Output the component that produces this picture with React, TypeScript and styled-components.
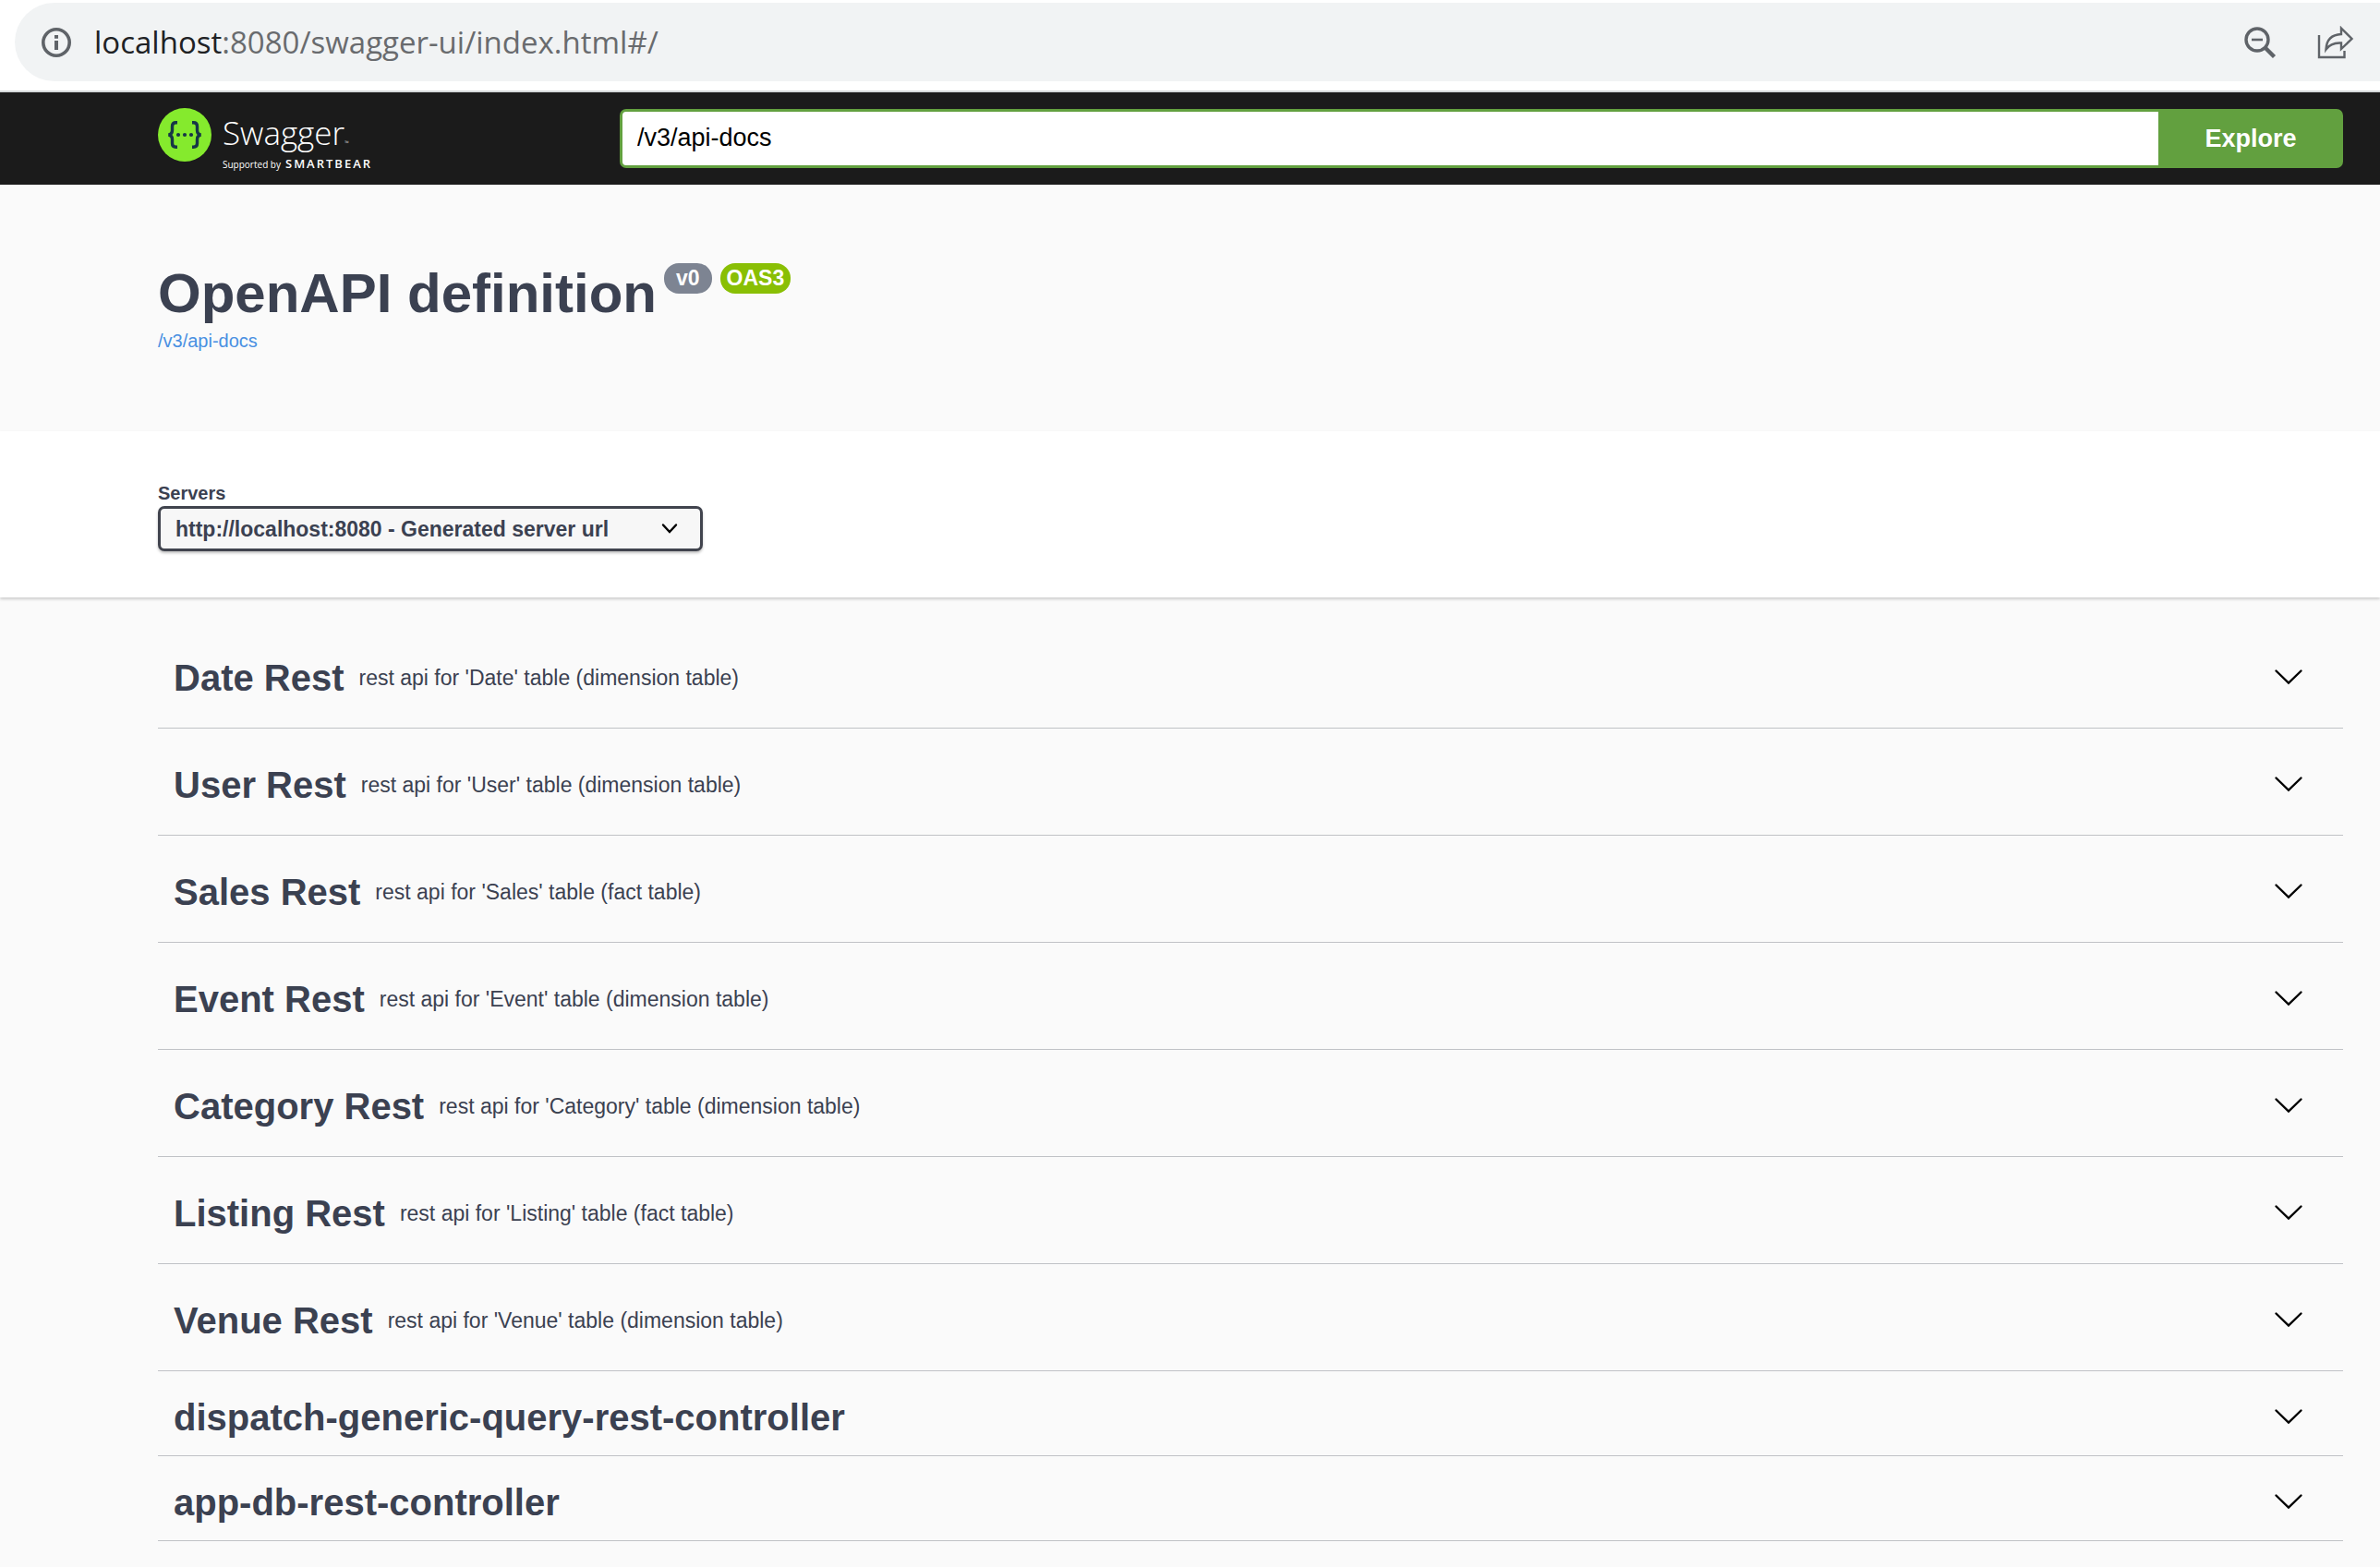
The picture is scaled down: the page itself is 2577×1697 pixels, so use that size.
import React from "react";
import styled, { createGlobalStyle } from "styled-components";

const sans = `"Liberation Sans", Arial, sans-serif`;
const humanist = `"Open Sans", "Noto Sans", sans-serif`;
const ink = "#3b4151";
const green = "#62a03f";

const GlobalStyle = createGlobalStyle`
  *, *::before, *::after { box-sizing: border-box; }
  body { margin: 0; background: #fafafa; color: ${ink}; font-family: ${sans}; }
`;

const BrowserBar = styled.header`
  display: flex;
  height: 100px;
  padding: 3px 0 10px 16px;
  background: #fff;
  border-bottom: 2px solid #d5d8da;
`;

const AddressPill = styled.div`
  flex: 1;
  display: flex;
  align-items: center;
  gap: 44px;
  padding: 0 28px;
  background: #f1f3f4;
  border-radius: 43px 0 0 43px;
`;

const AddressGroup = styled.div`
  flex: 1;
  display: flex;
  align-items: center;
  gap: 24px;
`;

const Address = styled.div`
  font-family: ${humanist};
  font-size: 33px;
  line-height: 46px;
  color: #696b6e;
`;

const Host = styled.span`
  color: #202124;
`;

const IconButton = styled.button`
  display: flex;
  padding: 0;
  border: 0;
  background: none;
`;

const TopBar = styled.div`
  display: flex;
  align-items: center;
  height: 100px;
  padding: 0 40px 0 171px;
  background: #1b1b1b;
`;

const LogoLink = styled.a`
  display: flex;
  gap: 12px;
  width: 500px;
  height: 66px;
  color: #fff;
  text-decoration: none;
  font-family: ${humanist};
`;

const LogoWords = styled.span`
  display: flex;
  flex-direction: column;
`;

const Brand = styled.span`
  font-size: 35px;
  font-weight: 300;
  line-height: 54px;
`;

const Trademark = styled.span`
  font-size: 6px;
  line-height: 6px;
`;

const Tagline = styled.span`
  display: flex;
  align-items: baseline;
  gap: 5px;
  font-size: 10px;
  line-height: 12px;
`;

const Sponsor = styled.span`
  font-size: 13px;
  font-weight: 600;
  letter-spacing: 2px;
`;

const SpecForm = styled.form`
  flex: 1;
  display: flex;
  height: 64px;
`;

const SpecInput = styled.input`
  flex: 1;
  min-width: 0;
  padding: 0 16px 2px;
  border: 3px solid ${green};
  border-right: 0;
  border-radius: 7px 0 0 7px;
  outline: none;
  background: #fff;
  color: #000;
  font-family: ${sans};
  font-size: 27px;
`;

const ExploreButton = styled.button`
  width: 200px;
  border: 0;
  border-radius: 0 7px 7px 0;
  background: ${green};
  color: #fff;
  font-family: ${sans};
  font-size: 27px;
  font-weight: 700;
`;

const Info = styled.section`
  height: 267px;
  padding: 83px 40px 0 171px;
`;

const Title = styled.h1`
  display: flex;
  align-items: flex-start;
  margin: 0;
  font-size: 60px;
  line-height: 70px;
`;

const Badges = styled.span`
  display: flex;
  gap: 9px;
  margin: 2px 0 0 8px;
`;

const Badge = styled.span<{ $color: string; $pad: number }>`
  padding: 0 ${(p) => p.$pad}px;
  border-radius: 16px;
  background: ${(p) => p.$color};
  color: #fff;
  font-size: 23px;
  line-height: 33px;
`;

const SpecLink = styled.a`
  display: block;
  width: max-content;
  margin-top: 5px;
  color: #4990e2;
  font-size: 20px;
  line-height: 22px;
  text-decoration: none;
`;

const SchemeBar = styled.section`
  display: flex;
  flex-direction: column;
  align-items: flex-start;
  padding: 56px 40px 50px 171px;
  background: #fff;
  box-shadow: 0 2px 3px rgba(0, 0, 0, 0.18);
`;

const ServersLabel = styled.label`
  margin-bottom: 3px;
  font-size: 20px;
  font-weight: 700;
  line-height: 22px;
`;

const SelectBox = styled.div`
  position: relative;
`;

const ServerSelect = styled.select`
  appearance: none;
  width: 590px;
  height: 49px;
  padding: 0 66px 0 16px;
  border: 3px solid #41444e;
  border-radius: 7px;
  background: #f7f7f7;
  box-shadow: 0 2px 3px rgba(0, 0, 0, 0.25);
  color: ${ink};
  font-family: ${sans};
  font-size: 23px;
  font-weight: 700;
`;

const SelectArrow = styled.svg`
  position: absolute;
  top: 18px;
  right: 27px;
  pointer-events: none;
`;

const TagList = styled.main`
  padding: 26px 40px 27px 171px;
`;

const TagRow = styled.div<{ $described: boolean }>`
  display: flex;
  align-items: center;
  padding: ${(p) => (p.$described ? "38px 42px 31px 17px" : "27px 42px 18px 17px")};
  border-bottom: 1px solid rgba(59, 65, 81, 0.3);
`;

const TagName = styled.h2`
  margin: 0;
  font-size: 40px;
  line-height: 46px;
`;

const TagText = styled.p`
  margin: 0 0 0 16px;
  font-size: 23px;
  line-height: 26px;
`;

const Toggle = styled.button`
  display: flex;
  margin-left: auto;
  padding: 0;
  border: 0;
  background: none;
`;

const tags = [
  { name: "Date Rest", text: "rest api for 'Date' table (dimension table)" },
  { name: "User Rest", text: "rest api for 'User' table (dimension table)" },
  { name: "Sales Rest", text: "rest api for 'Sales' table (fact table)" },
  { name: "Event Rest", text: "rest api for 'Event' table (dimension table)" },
  { name: "Category Rest", text: "rest api for 'Category' table (dimension table)" },
  { name: "Listing Rest", text: "rest api for 'Listing' table (fact table)" },
  { name: "Venue Rest", text: "rest api for 'Venue' table (dimension table)" },
  { name: "dispatch-generic-query-rest-controller" },
  { name: "app-db-rest-controller" },
];

const InfoIcon = () => (
  <svg width="34" height="34" viewBox="0 0 34 34" aria-hidden="true">
    <circle cx="17" cy="17" r="14.2" fill="none" stroke="#5f6368" strokeWidth="3.6" />
    <path d="M15 9h4v3.800h-4zM15 15h4v10h-4z" fill="#5f6368" />
  </svg>
);

const ZoomOutIcon = () => (
  <svg width="36" height="36" viewBox="0 0 36 36" fill="none" stroke="#5f6368" aria-hidden="true">
    <circle cx="15" cy="15" r="12" strokeWidth="3.4" />
    <path d="M9 15h12" strokeWidth="2.6" />
    <path d="M24 24l9.500 9.500" strokeWidth="4.4" />
  </svg>
);

const ShareIcon = () => (
  <svg width="40" height="36" viewBox="0 0 40 36" fill="none" stroke="#5f6368" strokeWidth="2.4" aria-hidden="true">
    <path d="M2 10v24h27.500v-7" />
    <path d="M26 2.500L37.500 14 26 25v-6.500c-8-.5-13 2-16.500 7C10 16 15 9.500 26 9z" />
  </svg>
);

const SwaggerMark = () => (
  <svg width="58" height="58" viewBox="0 0 58 58" aria-hidden="true">
    <circle cx="29" cy="29" r="29" fill="#85ea2d" />
    <g fill="none" stroke="#173647" strokeWidth="3.4">
      <path d="M21 15.700h-1.500c-3 0-4 1.500-4 4v4.300c0 3-1.200 4.500-4 5 2.800.5 4 2 4 5v4.300c0 2.500 1 4 4 4H21" />
      <path d="M37 15.700h1.500c3 0 4 1.500 4 4v4.300c0 3 1.200 4.500 4 5-2.800.5-4 2-4 5v4.300c0 2.500-1 4-4 4H37" />
    </g>
    <g fill="#173647">
      <circle cx="22" cy="29" r="2.100" />
      <circle cx="29" cy="29" r="2.100" />
      <circle cx="36" cy="29" r="2.100" />
    </g>
  </svg>
);

const Chevron = () => (
  <svg width="34" height="34" viewBox="0 0 34 34" aria-hidden="true">
    <path d="M3.500 9.500L17 22.500 30.500 9.500" fill="none" stroke="#000" strokeWidth="2.400" strokeLinecap="round" />
  </svg>
);

export default function App() {
  return (
    <>
      <GlobalStyle />
      <BrowserBar>
        <AddressPill>
          <AddressGroup>
            <InfoIcon />
            <Address>
              <Host>localhost</Host>:8080/swagger-ui/index.html#/
            </Address>
          </AddressGroup>
          <IconButton aria-label="Zoom out">
            <ZoomOutIcon />
          </IconButton>
          <IconButton aria-label="Share">
            <ShareIcon />
          </IconButton>
        </AddressPill>
      </BrowserBar>
      <TopBar>
        <LogoLink href="#/">
          <SwaggerMark />
          <LogoWords>
            <Brand>
              Swagger<Trademark>™</Trademark>
            </Brand>
            <Tagline>
              Supported by <Sponsor>SMARTBEAR</Sponsor>
            </Tagline>
          </LogoWords>
        </LogoLink>
        <SpecForm onSubmit={(e) => e.preventDefault()}>
          <SpecInput type="text" aria-label="Definition URL" defaultValue="/v3/api-docs" />
          <ExploreButton type="submit">Explore</ExploreButton>
        </SpecForm>
      </TopBar>
      <Info>
        <Title>
          OpenAPI definition
          <Badges>
            <Badge $color="#7d8492" $pad={13}>v0</Badge>
            <Badge $color="#89bf04" $pad={7}>OAS3</Badge>
          </Badges>
        </Title>
        <SpecLink href="/v3/api-docs">/v3/api-docs</SpecLink>
      </Info>
      <SchemeBar>
        <ServersLabel htmlFor="servers">Servers</ServersLabel>
        <SelectBox>
          <ServerSelect id="servers">
            <option>http://localhost:8080 - Generated server url</option>
          </ServerSelect>
          <SelectArrow width="18" height="13" viewBox="0 0 18 13" aria-hidden="true">
            <path d="M2 2.500l7 7.500 7-7.500" fill="none" stroke="#000" strokeWidth="2.400" strokeLinecap="round" />
          </SelectArrow>
        </SelectBox>
      </SchemeBar>
      <TagList>
        {tags.map((tag) => (
          <TagRow key={tag.name} $described={Boolean(tag.text)}>
            <TagName>{tag.name}</TagName>
            {tag.text && <TagText>{tag.text}</TagText>}
            <Toggle aria-label={`Expand ${tag.name}`}>
              <Chevron />
            </Toggle>
          </TagRow>
        ))}
      </TagList>
    </>
  );
}
